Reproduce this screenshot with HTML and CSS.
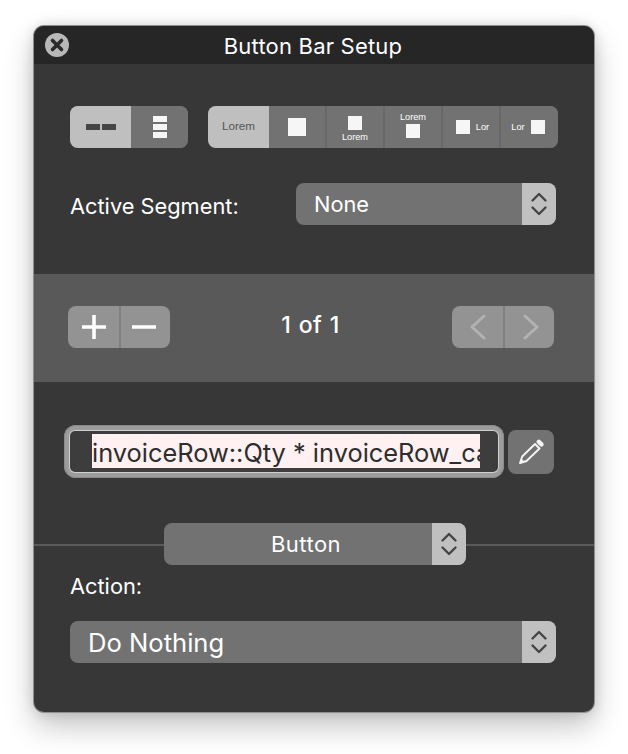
FILE: index.html
```html
<!DOCTYPE html>
<html lang="en">
<head>
<meta charset="utf-8">
<title>Button Bar Setup</title>
<link rel="stylesheet" href="styles.css">
</head>
<body>
<main class="window">
  <header class="titlebar">
    <svg class="close" width="24" height="24" viewBox="0 0 24 24"><circle cx="12" cy="12" r="12" fill="#b8b8b8"/><path d="M7.5 7.5l9 9M16.5 7.5l-9 9" stroke="#2b2b2b" stroke-width="3.6" stroke-linecap="round"/></svg>
    <h1 class="title">Button Bar Setup</h1>
  </header>

  <section class="top">
    <div class="seg-row">
      <div class="seg seg-orient">
        <div class="cell cell-on cell-61">
          <span class="dash"></span><span class="dash"></span>
        </div>
        <div class="cell cell-fill stack">
          <span class="bar"></span><span class="bar"></span><span class="bar"></span>
        </div>
      </div>
      <div class="seg seg-style">
        <div class="cell cell-on cell-61"><span class="lorem-on">Lorem</span></div>
        <div class="cell cell-w58"><span class="sq sq-18"></span></div>
        <div class="cell cell-w58 col col-below"><span class="sq sq-14"></span><span class="tiny">Lorem</span></div>
        <div class="cell cell-w58 col col-above"><span class="tiny">Lorem</span><span class="sq sq-14"></span></div>
        <div class="cell cell-w58 hz hz-right"><span class="sq sq-14"></span><span class="tiny">Lor</span></div>
        <div class="cell cell-fill hz hz-left"><span class="tiny">Lor</span><span class="sq sq-14"></span></div>
      </div>
    </div>
    <div class="active-row">
      <span class="label label-active">Active Segment:</span>
      <div class="select select-active">
        <span class="select-text">None</span>
        <span class="arrows"><svg width="20" height="26" viewBox="0 0 20 26"><path d="M3.5 9.5L10 3l6.500 6.500M3.500 16.500L10 23l6.500-6.500" fill="none" stroke="#454545" stroke-width="2.4" stroke-linecap="round" stroke-linejoin="round"/></svg></span>
      </div>
    </div>
  </section>

  <section class="band">
    <div class="stepper">
      <div class="step step-first">
        <svg width="26" height="26" viewBox="0 0 26 26"><path d="M13 1v24M1 13h24" stroke="#fff" stroke-width="3.6"/></svg>
      </div>
      <div class="step">
        <svg class="shift-left" width="26" height="26" viewBox="0 0 26 26"><path d="M1 13h24" stroke="#fff" stroke-width="3.6"/></svg>
      </div>
    </div>
    <span class="count">1 of 1</span>
    <div class="stepper">
      <div class="step step-first">
        <svg width="16" height="26" viewBox="0 0 16 26"><path d="M14 2L2 13l12 11" fill="none" stroke="#b2b2b2" stroke-width="3" stroke-linecap="round" stroke-linejoin="round"/></svg>
      </div>
      <div class="step">
        <svg class="shift-right" width="16" height="26" viewBox="0 0 16 26"><path d="M2 2l12 11L2 24" fill="none" stroke="#b2b2b2" stroke-width="3" stroke-linecap="round" stroke-linejoin="round"/></svg>
      </div>
    </div>
  </section>

  <section class="calc">
    <div class="field">
      <div class="field-inner"><span class="field-text">invoiceRow::Qty * invoiceRow_ca</span></div>
    </div>
    <div class="pencil">
      <svg width="26" height="26" viewBox="0 0 26 26"><path d="M2 24l2.200-6.500L17 5l4.500 4.500L8.500 22z" fill="none" stroke="#f4f4f4" stroke-width="1.9" stroke-linejoin="round"/><path d="M1.500 24.500l1.800-5 3.200 3.200z" fill="#f4f4f4"/><path d="M20.800 2.800l2.600 2.600" stroke="#f4f4f4" stroke-width="4.400" stroke-linecap="round"/></svg>
    </div>
  </section>

  <section class="divider-row">
    <span class="rule rule-left"></span>
    <div class="select select-button">
      <span class="select-text select-center">Button</span>
      <span class="arrows"><svg width="20" height="26" viewBox="0 0 20 26"><path d="M3.500 9.500L10 3l6.500 6.500M3.500 16.500L10 23l6.500-6.500" fill="none" stroke="#454545" stroke-width="2.4" stroke-linecap="round" stroke-linejoin="round"/></svg></span>
    </div>
    <span class="rule"></span>
  </section>

  <section class="action">
    <div class="label action-label">Action:</div>
    <div class="select select-action">
      <span class="select-text select-large">Do Nothing</span>
      <span class="arrows"><svg width="20" height="26" viewBox="0 0 20 26"><path d="M3.500 9.500L10 3l6.500 6.500M3.500 16.500L10 23l6.500-6.500" fill="none" stroke="#454545" stroke-width="2.4" stroke-linecap="round" stroke-linejoin="round"/></svg></span>
    </div>
  </section>
</main>
</body>
</html>
```
FILE: styles.css
```css
* { box-sizing: border-box; }
html, body { height: 100%; }
body {
  margin: 0;
  padding: 26px 34px 0;
  background: #fff;
  overflow: hidden;
  font-family: "Inter", "Liberation Sans", sans-serif;
  color: #fff;
}
.window {
  width: 560px;
  height: 686px;
  background: #373737;
  border-radius: 10px;
  overflow: hidden;
  box-shadow: 0 0 0 1px #8f8f8f, 0 14px 30px rgba(0, 0, 0, 0.24), 0 0 14px rgba(0, 0, 0, 0.14);
}
.titlebar {
  height: 38px;
  background: #262626;
  display: flex;
  align-items: center;
  justify-content: center;
  padding: 2px 2px 0 0;
  position: relative;
}
.close { position: absolute; left: 11px; top: 7px; }
.title { margin: 0; font-size: 22px; font-weight: 400; letter-spacing: 0.2px; }

.top { padding: 42px 36px 0; height: 210px; }
.seg-row { display: flex; gap: 20px; }
.seg { display: flex; height: 42px; border-radius: 8px; overflow: hidden; background: #727272; }
.seg-orient { width: 118px; }
.seg-style { width: 350px; }
.cell { display: flex; align-items: center; justify-content: center; background: #727272; }
.cell-on { background: #bfbfbf; }
.cell-61 { width: 61px; flex: none; }
.cell-w58 { width: 58px; flex: none; border-right: 2px solid #686868; }
.cell-fill { flex: 1; }
.dash { width: 14px; height: 6px; background: #454545; margin: 0 1px; }
.stack { flex-direction: column; gap: 2px; }
.bar { width: 14px; height: 6px; background: #f6f6f6; }
.lorem-on { font-family: "Liberation Sans", sans-serif; font-size: 11.7px; color: #555; margin-bottom: 3px; }
.sq { display: block; background: #f6f6f6; }
.sq-18 { width: 18px; height: 18px; }
.sq-14 { width: 14px; height: 14px; }
.tiny { font-family: "Liberation Sans", sans-serif; font-size: 9.2px; line-height: 10px; color: #fff; }
.col { flex-direction: column; gap: 2px; }
.col-below { padding-top: 4px; }
.col-above { padding-bottom: 4px; }
.hz { gap: 6px; }
.hz-right { padding-left: 3px; }
.hz-left { padding-right: 3px; }

.active-row { display: flex; align-items: center; justify-content: space-between; margin-top: 35px; width: 486px; }
.label { font-size: 21.8px; }
.label-active { margin-top: 4px; }

.select { display: flex; align-items: center; height: 42px; background: #727272; border-radius: 8px; overflow: hidden; }
.select-active { width: 260px; }
.select-button { width: 302px; flex: none; }
.select-action { width: 486px; margin-top: 22px; }
.select-text { flex: 1; padding-left: 18px; font-size: 21.8px; }
.select-center { text-align: center; padding-left: 16px; font-size: 22px; letter-spacing: 0.5px; }
.select-large { font-size: 25.6px; }
.arrows { width: 34px; height: 42px; flex: none; background: #c0c0c0; display: flex; align-items: center; justify-content: center; }

.band {
  height: 108px;
  background: #595959;
  display: flex;
  align-items: center;
  justify-content: space-between;
  padding: 0 40px 3px 34px;
}
.stepper { display: flex; width: 102px; height: 42px; background: #939393; border-radius: 8px; overflow: hidden; }
.step { flex: 1; display: flex; align-items: center; justify-content: center; }
.step-first { flex: none; width: 53px; border-right: 2px solid #808080; }
.shift-left { margin-right: 3px; }
.shift-right { margin-left: 3px; }
.count { font-size: 23px; font-weight: 500; letter-spacing: 0.4px; word-spacing: 1px; margin: 0 1px 3px 0; }

.calc { display: flex; align-items: center; padding: 43px 0 0 30px; gap: 4px; }
.field {
  width: 440px;
  height: 53px;
  padding: 6px;
  border-radius: 12px;
  background: #9c9c9c;
  box-shadow: inset 0 0 0 1px #8a8a8a;
}
.field-inner {
  height: 41px;
  padding: 3px 0 0 22px;
  background: #3d3d3d;
  border-radius: 5px;
  box-shadow: 0 0 0 1px #cfcfcf;
}
.field-text {
  display: block;
  width: 388px;
  height: 34px;
  background: #fff1f1;
  color: #2d2d2d;
  font-size: 25.4px;
  line-height: 38px;
  white-space: nowrap;
  overflow: hidden;
}
.pencil { width: 46px; height: 44px; background: #727272; border-radius: 8px; display: flex; align-items: center; justify-content: center; }

.divider-row { display: flex; align-items: center; margin-top: 45px; }
.rule { flex: 1; height: 2px; margin-top: 2px; background: #5a5a5a; }
.rule-left { flex: none; width: 130px; }

.action { padding: 0 36px; }
.action-label { margin-top: 8px; line-height: 26px; }
```
